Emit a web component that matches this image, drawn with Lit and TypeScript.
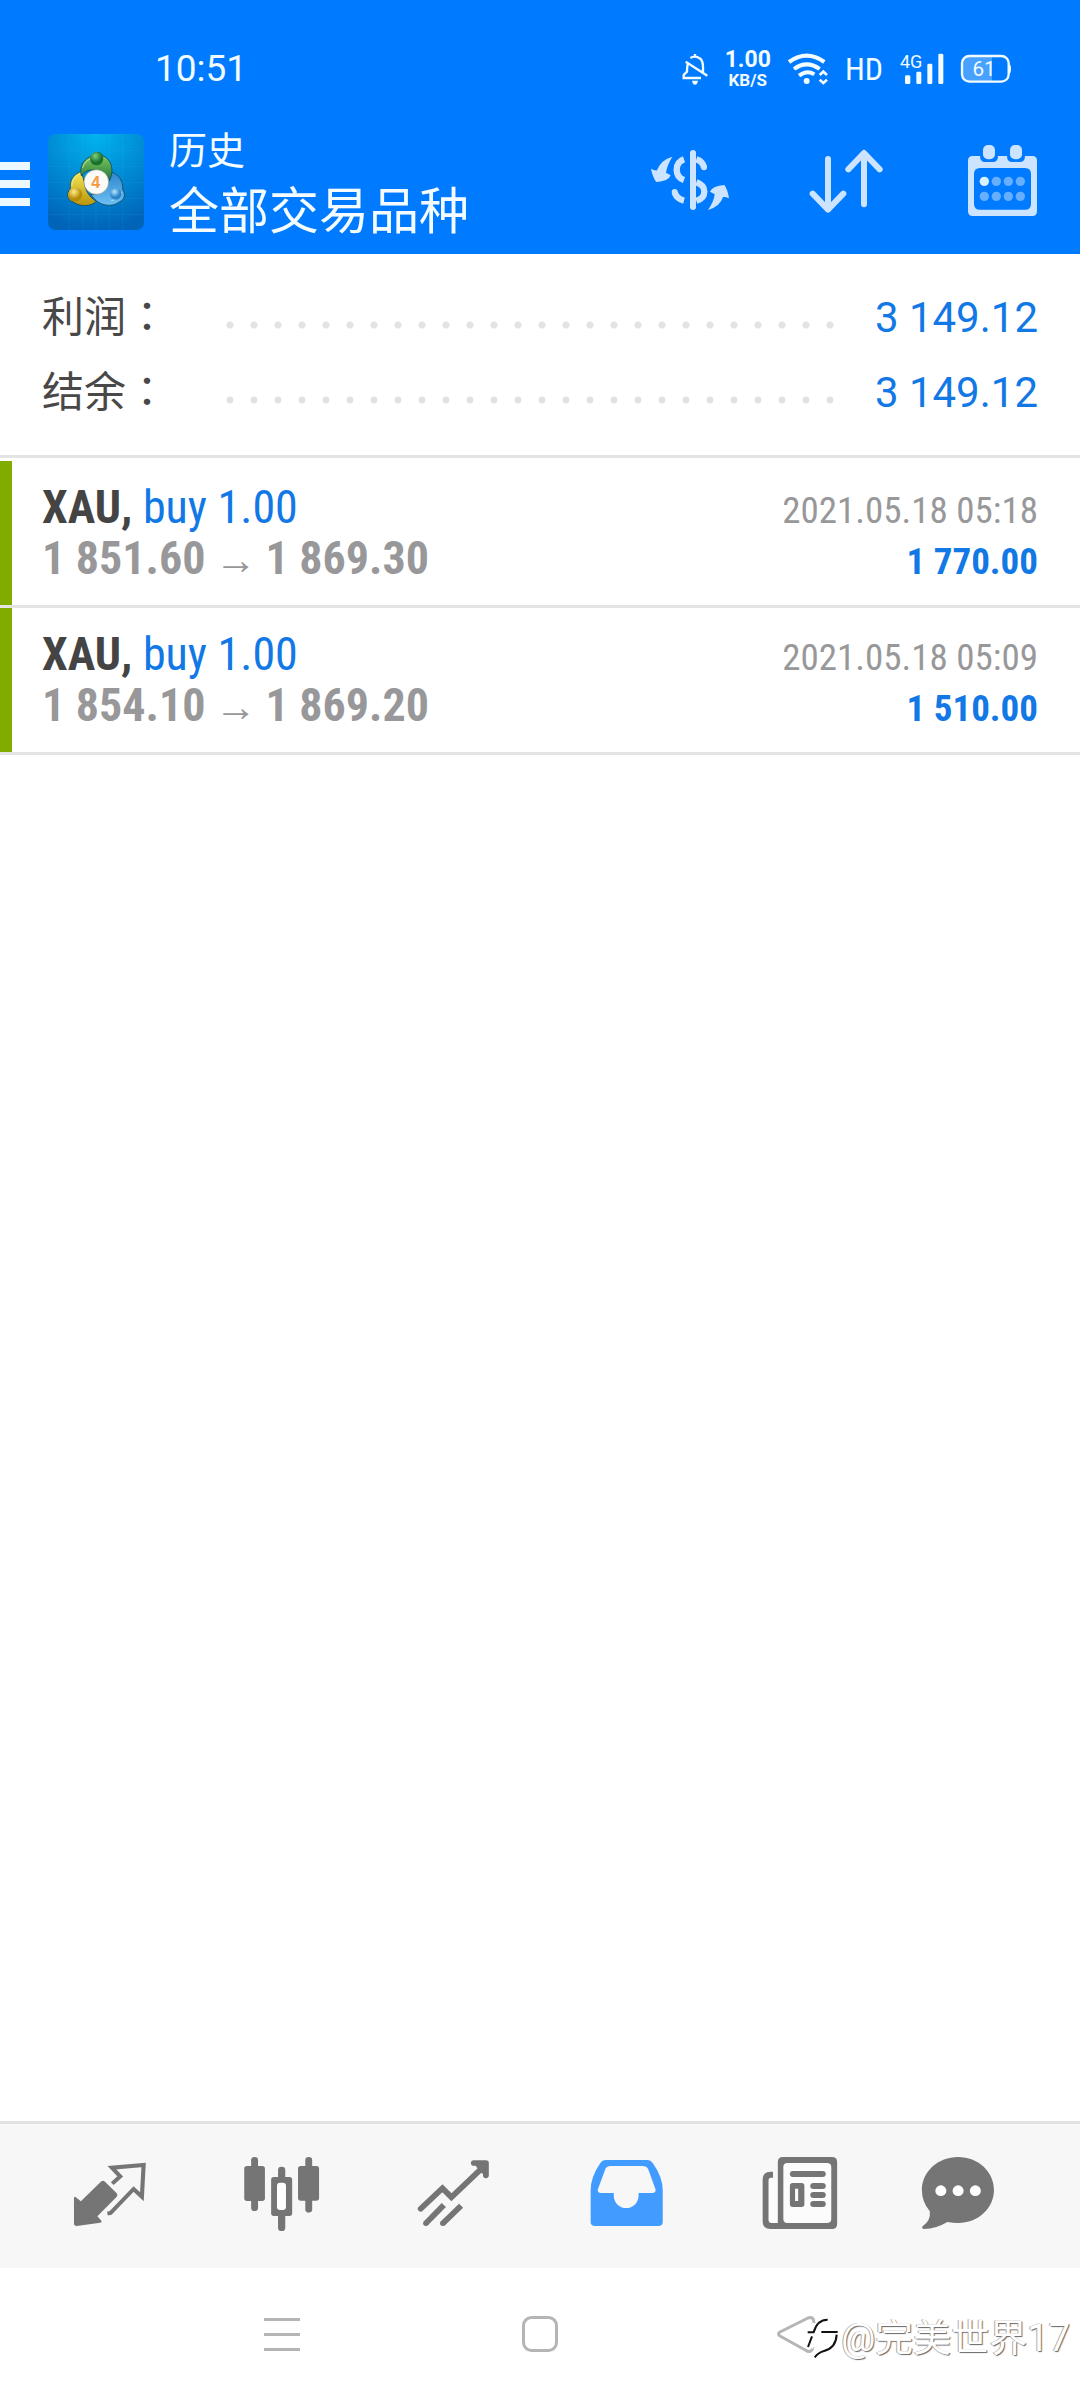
import { LitElement, html, svg, css } from "lit";
import { customElement, property, state } from "lit/decorators.js";

interface Deal {
  symbol: string;
  action: string;
  open: string;
  close: string;
  time: string;
  profit: string;
}

const deals: Deal[] = [
  { symbol: "XAU", action: "buy 1.00", open: "1 851.60", close: "1 869.30", time: "2021.05.18 05:18", profit: "1 770.00" },
  { symbol: "XAU", action: "buy 1.00", open: "1 854.10", close: "1 869.20", time: "2021.05.18 05:09", profit: "1 510.00" },
];

const totals = [
  { label: "利润", value: "3 149.12" },
  { label: "结余", value: "3 149.12" },
];

const tabs = [
  {
    name: "行情",
    box: "189 123 261 270",
    art: svg`
      <path fill="currentColor" d="M293 215q6-6 12 0l34 35q4 5 0 10l-56 59 12 14q1 5-4 5l-68 10q-8 0-8-8v-77q3-5 7 0l13 11z"/>
      <path fill="none" stroke="currentColor" stroke-width="12" d="M326 221l23-22-24-26 92-8-5 95-24-23-67 72-9 2"/>`,
  },
  {
    name: "图表",
    box: "688 123 261 270",
    art: svg`
      <g fill="currentColor">
        <rect x="729" y="141" width="20" height="162" rx="10"/>
        <rect x="709" y="168" width="60" height="105" rx="8"/>
        <rect x="886" y="141" width="20" height="167" rx="10"/>
        <rect x="865" y="168" width="61" height="104" rx="8"/>
        <rect x="807" y="170" width="21" height="193" rx="10"/>
        <rect x="787" y="201" width="61" height="117" rx="8"/>
      </g>
      <rect x="804" y="218" width="26" height="82" rx="9" fill="#fff"/>`,
  },
  {
    name: "交易",
    box: "1188 123 261 270",
    art: svg`
      <g fill="none" stroke="currentColor" stroke-width="17">
        <path stroke-linecap="round" d="M1222 296l63-61 26 27 96-95"/>
        <path stroke-linecap="round" stroke-linejoin="round" d="M1376 159h35v37"/>
        <path d="M1236 341l53-56M1285 341l54-54"/>
      </g>
      <path fill="currentColor" d="M1376 160h35v37l-16-10z"/>
      <circle cx="1237" cy="340" r="8" fill="currentColor"/>
      <circle cx="1286" cy="340" r="8" fill="currentColor"/>`,
  },
  {
    name: "历史",
    box: "119 123 261 270",
    art: svg`
      <path fill="currentColor" fill-rule="evenodd" d="M190 150h122q9 0 15 9 29 42 29 82v94q0 13-13 13H160q-13 0-13-13v-94q0-40 28-82 6-9 15-9zM206 168q-12 0-16 8l-22 62q-2 11 9 11h37v8a36 37 0 0 0 72 0v-8h40q11 0 9-11l-21-60q-5-10-17-10z"/>`,
  },
  {
    name: "新闻",
    box: "619 123 261 270",
    art: svg`
      <rect x="700" y="152" width="155" height="195" fill="#fcfcfc"/>
      <path fill="#fcfcfc" d="M664 204h27v135h-18q-9 0-9-9z"/>
      <path fill="currentColor" fill-rule="evenodd" d="M706 141h142q15 0 15 15v186q0 15-15 15H670q-23 0-23-23V208q0-23 23-23h7v18h-6q-7 0-7 8v119q0 9 9 9h18V156q0-15 15-15zM719 159q-12 0-12 12v156q0 12 12 12h114q13 0 13-12V171q0-12-13-12z"/>
      <g fill="currentColor">
        <rect x="726" y="183" width="104" height="18" rx="9"/>
        <path fill-rule="evenodd" d="M734 219h26q8 0 8 8v56q0 8-8 8h-26q-8 0-8-8v-56q0-8 8-8zm7 17v37h9v-37z"/>
        <rect x="785" y="219" width="45" height="18" rx="9"/>
        <rect x="785" y="246" width="45" height="18" rx="9"/>
        <rect x="785" y="273" width="45" height="18" rx="9"/>
      </g>`,
  },
  {
    name: "消息",
    box: "1118 123 261 270",
    art: svg`
      <path fill="currentColor" d="M1214 141c58 0 104 44 104 99s-46 99-104 99q-16 0-31-3-32 20-68 21-9-2-3-9 23-16 20-44-23-28-23-64c0-55 47-99 105-99z"/>
      <g fill="#fff"><circle cx="1164" cy="242" r="16"/><circle cx="1214" cy="242" r="16"/><circle cx="1264" cy="242" r="16"/></g>`,
  },
];

@customElement("status-bar")
class StatusBar extends LitElement {
  static styles = css`
    :host { display: flex; align-items: center; height: 82px; padding: 28px 69px 0 155px; color: #f2fbff; font-family: Roboto, "Liberation Sans", sans-serif; }
    .time { flex: 1; font-size: 37px; line-height: 44px; }
    .tray { display: flex; align-items: center; gap: 17px; }
    .speed { display: flex; flex-direction: column; align-items: center; font-size: 23px; line-height: 22px; font-weight: 700; }
    .unit { font-size: 17px; line-height: 18px; }
    .hd { font-family: "Roboto Condensed", Roboto, sans-serif; font-size: 32px; line-height: 38px; }
    svg { display: block; overflow: visible; }
    .net { font-family: Roboto, sans-serif; font-size: 54px; }
    .charge { font-family: Roboto, sans-serif; font-size: 62px; }
  `;
  render() {
    return html`
      <span class="time">10:51</span>
      <div class="tray">
        <svg width="26" height="32" viewBox="178 69 78 96" aria-hidden="true" fill="none" stroke="currentColor" stroke-width="7">
          <path d="M189 95L254 137M203 84q14-9 30 2 8 8 8 26v18M195 103q-2 10-2 22l-10 10v9h52M217 72v9"/>
          <path fill="currentColor" stroke="none" d="M208 152h18q-2 12-9 12t-9-12z"/>
        </svg>
        <div class="speed"><span>1.00</span><span class="unit">KB/S</span></div>
        <svg width="40" height="32" viewBox="508 69 120 96" aria-hidden="true" fill="none" stroke="currentColor" stroke-width="12">
          <path d="M511 96q53-38 106 0M526 117q38-28 77 0M541 137q24-18 46-4"/>
          <circle cx="564" cy="153" r="9" fill="currentColor" stroke="none"/>
          <path stroke-width="8" d="M603 135l11-10 11 10M603 149l11 10 11-10"/>
        </svg>
        <span class="hd">HD</span>
        <svg width="44" height="32" viewBox="836 69 132 96" role="img" aria-label="4G" fill="currentColor">
          <text class="net" x="836" y="114">4G</text>
          <rect x="851" y="136" width="16" height="26" rx="4"/>
          <rect x="885" y="125" width="15" height="37" rx="4"/>
          <rect x="918" y="101" width="15" height="61" rx="4"/>
          <rect x="951" y="71" width="15" height="91" rx="4"/>
        </svg>
        <svg width="50" height="32" viewBox="1023 69 150 96" role="img" aria-label="61" fill="currentColor">
          <path opacity=".3" d="M1046 79h70v76h-70q-19 0-19-20V99q0-20 19-20z"/>
          <rect x="1026" y="78" width="140" height="77" rx="22" fill="none" stroke="currentColor" stroke-width="7"/>
          <path d="M1167 102q6 2 6 15t-6 15z"/>
          <text class="charge" x="1092" y="139" text-anchor="middle">61</text>
        </svg>
      </div>`;
  }
}

@customElement("app-header")
class AppHeader extends LitElement {
  static styles = css`
    :host { display: flex; align-items: center; height: 144px; padding-right: 36px; color: #cce4ff; font-family: "Noto Sans CJK SC", sans-serif; }
    button { display: block; padding: 0; border: 0; background: none; color: inherit; }
    svg { display: block; }
    .menu { color: #ebf9ff; margin-right: 18px; }
    .titles { flex: 1; margin-left: 25px; color: #f4fcff; }
    h1, p { margin: 0; font-weight: 400; }
    p { font-size: 38px; line-height: 50px; }
    h1 { font-size: 50px; line-height: 68px; }
    .actions { display: flex; gap: 72px; }
    .four { font: 700 48px "Liberation Sans", sans-serif; }
  `;
  render() {
    return html`
      <button class="menu" aria-label="菜单">
        <svg width="30" height="48" viewBox="0 0 30 48" fill="currentColor"><path d="M0 4h30v8H0zM0 22h30v8H0zM0 40h30v8H0z"/></svg>
      </button>
      <svg width="96" height="96" viewBox="0 0 288 288" aria-hidden="true">
        <defs>
          <radialGradient id="sky" cx=".5" cy="0" r="1"><stop offset="0" stop-color="#00b4ee"/><stop offset=".55" stop-color="#0088d2"/><stop offset="1" stop-color="#0064b8"/></radialGradient>
          <linearGradient id="green" x2="0" y2="1"><stop stop-color="#8fd06a"/><stop offset="1" stop-color="#1f7c35"/></linearGradient>
          <linearGradient id="gold" x2="0" y2="1"><stop stop-color="#f5ea55"/><stop offset="1" stop-color="#b8930c"/></linearGradient>
          <linearGradient id="azure" x2="0" y2="1"><stop stop-color="#2c86cc"/><stop offset="1" stop-color="#6cc0f4"/></linearGradient>
          <radialGradient id="gball" cx=".4" cy=".3"><stop stop-color="#7dd07c"/><stop offset="1" stop-color="#18722c"/></radialGradient>
          <radialGradient id="yball" cx=".4" cy=".3"><stop stop-color="#fff08a"/><stop offset="1" stop-color="#b58c08"/></radialGradient>
          <radialGradient id="bball" cx=".4" cy=".3"><stop stop-color="#b8e6ff"/><stop offset="1" stop-color="#2a82c8"/></radialGradient>
        </defs>
        <rect width="288" height="288" rx="22" fill="url(#sky)"/>
        <path stroke="#5cc8f4" stroke-opacity=".14" stroke-width="2" d="M64 0v288M104 0v288M144 0v288M184 0v288M224 0v288M0 50h288M0 98h288M0 146h288M0 194h288M0 242h288"/>
        <g stroke="#17536b" stroke-width="3">
          <path fill="url(#gold)" d="M100 112C74 122 64 142 67 164c-14 14-10 34 8 40 24 16 54 14 70-2-20-12-34-32-36-58z"/>
          <path fill="url(#azure)" d="M190 114c24 8 36 28 34 52 10 14 6 32-10 38-24 18-66 12-86-24 22 4 54-10 62-66z"/>
          <path fill="url(#green)" d="M98 112c0-22 14-40 34-46 8-14 26-14 32-1 24 10 36 38 22 72-14-22-36-32-62-28-10 2-18 8-24 16z"/>
        </g>
        <path fill="none" stroke="#dff2c4" stroke-width="3" opacity=".75" d="M104 102c4-16 14-24 26-28M72 156c0-14 6-26 18-34M190 200c18-4 28-14 30-26"/>
        <circle cx="146" cy="74" r="20" fill="url(#gball)"/>
        <circle cx="82" cy="182" r="21" fill="url(#yball)"/>
        <circle cx="203" cy="180" r="17" fill="url(#bball)"/>
        <circle cx="145" cy="144" r="37" fill="#fbfaf6" stroke="#8b9a8a" stroke-width="2"/>
        <text class="four" x="143" y="161" text-anchor="middle" fill="#f39a45">4</text>
      </svg>
      <div class="titles"><p>历史</p><h1>全部交易品种</h1></div>
      <div class="actions">
        <button aria-label="货币">
          <svg width="84" height="84" viewBox="84 60 252 252" fill="none" stroke="currentColor" stroke-width="19">
            <path fill="currentColor" stroke="none" d="M157 110q-16 26-19 48l14 8q-6 18-43 20-11-14-16-40 10 6 18 5 12-32 46-41zM264 270q18-26 20-47l-14-8q8-18 43-20 10 12 14 40-10-5-18-4-8 28-45 39z"/>
            <path stroke-width="18" stroke-linecap="round" d="M219 99v162"/>
            <path d="M192 118q-22 8-22 31t22 31M192 242q-20-5-28-24M229 118q19 6 23 24M229 187q24 8 24 28t-24 27"/>
            <circle cx="164" cy="216" r="9" fill="currentColor" stroke="none"/>
            <circle cx="252" cy="142" r="9" fill="currentColor" stroke="none"/>
          </svg>
        </button>
        <button aria-label="排序">
          <svg width="84" height="84" viewBox="552 60 252 252" fill="none" stroke="currentColor" stroke-width="18" stroke-linecap="round" stroke-linejoin="round">
            <path d="M624 117v151M578 221l46 48 46-48M732 253V100M685 148l47-49 47 49"/>
          </svg>
        </button>
        <button aria-label="日期">
          <svg width="84" height="84" viewBox="1020 60 252 252" fill="currentColor">
            <path fill-rule="evenodd" d="M1058 108h22q0 18 16 18h22q16 0 16-18h27q0 18 16 18h22q16 0 16-18h22q14 0 14 14v152q0 14-14 14h-179q-14 0-14-14V122q0-14 14-14zm22 36q-18 0-18 18v89q0 18 18 18h135q18 0 18-18v-89q0-18-18-18z"/>
            <rect x="1089" y="75" width="36" height="43" rx="15"/>
            <rect x="1170" y="75" width="36" height="43" rx="15"/>
            <circle cx="1093" cy="184" r="14" fill="#d8f2ff"/>
            <g opacity=".5"><circle cx="1129" cy="184" r="14"/><circle cx="1165" cy="184" r="14"/><circle cx="1201" cy="184" r="14"/><circle cx="1093" cy="229" r="14"/><circle cx="1129" cy="229" r="14"/><circle cx="1165" cy="229" r="14"/><circle cx="1201" cy="229" r="14"/></g>
          </svg>
        </button>
      </div>`;
  }
}

@customElement("deal-row")
class DealRow extends LitElement {
  @property({ attribute: false }) deal!: Deal;
  static styles = css`
    :host { display: block; padding: 21px 42px 21px 30px; border-left: 12px solid #80ac00; font-family: "Roboto Condensed", "Liberation Sans Narrow", Roboto, sans-serif; font-size: 46px; line-height: 51px; color: #98989a; }
    .line { display: flex; justify-content: space-between; align-items: baseline; height: 51px; white-space: nowrap; }
    .end { font-size: 37px; line-height: 43px; }
    .symbol { font-weight: 700; color: #444; }
    .action { color: #1278e6; }
    .prices { display: flex; align-items: baseline; gap: 9px; font-weight: 700; }
    .arrow { font: 400 42px "Liberation Sans", sans-serif; line-height: 42px; }
    .profit { font-weight: 700; color: #1278e6; }
  `;
  render() {
    const d = this.deal;
    return html`
      <div class="line">
        <span><span class="symbol">${d.symbol},</span> <span class="action">${d.action}</span></span>
        <span class="end">${d.time}</span>
      </div>
      <div class="line">
        <span class="prices"><span>${d.open}</span><span class="arrow">→</span><span>${d.close}</span></span>
        <span class="end profit">${d.profit}</span>
      </div>`;
  }
}

@customElement("app-root")
class AppRoot extends LitElement {
  @state() private active = 3;
  static styles = css`
    :host { display: flex; flex-direction: column; position: relative; min-height: 100vh; background: #fff; font-family: Roboto, "Noto Sans CJK SC", sans-serif; }
    .top { background: #007aff; }
    main { flex: 1; }
    .totals { margin: 0; padding: 26px 42px 25px; border-bottom: 3px solid #e4e4e4; font-size: 42px; line-height: 75px; }
    .total { display: flex; align-items: baseline; }
    dt { color: #484848; }
    .colon { font-family: "Noto Sans CJK TC", sans-serif; line-height: 1; }
    .dots { flex: 1; height: 14px; margin: 0 30px 0 50px; background: radial-gradient(circle at 12px 7px, #e2e2e2 3px, transparent 4px) 0 0 / 24px 14px; }
    dd { margin: 0; color: #1278e6; }
    ul { list-style: none; margin: 0; padding: 3px 0 0; }
    li { border-bottom: 3px solid #e4e4e4; }
    .tabs { display: flex; padding: 0 24px; border-top: 3px solid #e2e2e2; background: #f7f7f7; }
    button { padding: 0; border: 0; background: none; color: #757575; }
    .tab { flex: 1; display: flex; justify-content: center; align-items: center; height: 144px; }
    .tab.on { color: #429cff; }
    svg { display: block; overflow: visible; }
    .system { display: flex; padding: 0 153px; height: 132px; }
    .key { flex: 1; display: flex; justify-content: center; align-items: center; color: #b5b5b5; }
    .mark { position: absolute; right: 10px; bottom: 38px; display: flex; align-items: center; gap: 4px; font-family: Roboto, "Noto Sans CJK SC", sans-serif; font-size: 38px; line-height: 48px; color: #fff; text-shadow: -1px 0 0 #aaa, 1px 1px 1px #666; pointer-events: none; }
  `;
  render() {
    return html`
      <header class="top"><status-bar></status-bar><app-header></app-header></header>
      <main>
        <dl class="totals">
          ${totals.map((t) => html`<div class="total"><dt>${t.label}<span class="colon">：</span></dt><div class="dots"></div><dd>${t.value}</dd></div>`)}
        </dl>
        <ul>${deals.map((d) => html`<li><deal-row .deal=${d}></deal-row></li>`)}</ul>
      </main>
      <nav class="tabs">
        ${tabs.map((t, i) => html`
          <button class="tab ${i === this.active ? "on" : ""}" aria-label=${t.name} @click=${() => (this.active = i)}>
            <svg width="90" height="90" viewBox=${t.box} preserveAspectRatio="none">${t.art}</svg>
          </button>`)}
      </nav>
      <div class="system">
        <button class="key" aria-label="最近任务"><svg width="36" height="36" viewBox="0 0 36 36" fill="currentColor"><path d="M0 2h36v3H0zM0 17h36v3H0zM0 32h36v3H0z"/></svg></button>
        <button class="key" aria-label="主屏幕"><svg width="36" height="36" viewBox="0 0 36 36" fill="none" stroke="currentColor" stroke-width="3"><rect x="1.5" y="1.5" width="33" height="33" rx="8"/></svg></button>
        <button class="key" aria-label="返回"><svg width="42" height="42" viewBox="0 0 42 42" fill="none" stroke="currentColor" stroke-width="3" stroke-linejoin="round"><path d="M37 10q0-7-6-5L3 19q-3 2 0 4l27 15q5 2 6-4"/></svg></button>
      </div>
      <div class="mark">
        <svg width="30" height="40" viewBox="210 158 90 120" fill="none" stroke="#111" stroke-width="6">
          <path stroke="#fff" stroke-width="14" d="M222 249l10-46q12-36 42-34M236 272q12-12 32-16 26-10 28-40"/>
          <path d="M213 245l12-32M212 201h18q10-38 42-38M253 200h49M299 208q-2 40-38 49-16 4-28 19"/>
        </svg>
        <span>@完美世界17</span>
      </div>`;
  }
}
